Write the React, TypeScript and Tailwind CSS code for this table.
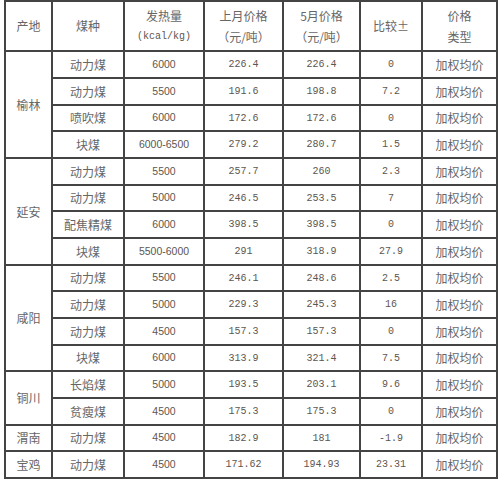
type Row = {
  kind: string;
  heat: string;
  last: string;
  may: string;
  diff: string;
};

type Group = { place: string; rows: Row[] };

const groups: Group[] = [
  {
    place: "榆林",
    rows: [
      { kind: "动力煤", heat: "6000", last: "226.4", may: "226.4", diff: "0" },
      { kind: "动力煤", heat: "5500", last: "191.6", may: "198.8", diff: "7.2" },
      { kind: "喷吹煤", heat: "6000", last: "172.6", may: "172.6", diff: "0" },
      { kind: "块煤", heat: "6000-6500", last: "279.2", may: "280.7", diff: "1.5" },
    ],
  },
  {
    place: "延安",
    rows: [
      { kind: "动力煤", heat: "5500", last: "257.7", may: "260", diff: "2.3" },
      { kind: "动力煤", heat: "5000", last: "246.5", may: "253.5", diff: "7" },
      { kind: "配焦精煤", heat: "6000", last: "398.5", may: "398.5", diff: "0" },
      { kind: "块煤", heat: "5500-6000", last: "291", may: "318.9", diff: "27.9" },
    ],
  },
  {
    place: "咸阳",
    rows: [
      { kind: "动力煤", heat: "5500", last: "246.1", may: "248.6", diff: "2.5" },
      { kind: "动力煤", heat: "5000", last: "229.3", may: "245.3", diff: "16" },
      { kind: "动力煤", heat: "4500", last: "157.3", may: "157.3", diff: "0" },
      { kind: "块煤", heat: "6000", last: "313.9", may: "321.4", diff: "7.5" },
    ],
  },
  {
    place: "铜川",
    rows: [
      { kind: "长焰煤", heat: "5000", last: "193.5", may: "203.1", diff: "9.6" },
      { kind: "贫瘦煤", heat: "4500", last: "175.3", may: "175.3", diff: "0" },
    ],
  },
  {
    place: "渭南",
    rows: [{ kind: "动力煤", heat: "4500", last: "182.9", may: "181", diff: "-1.9" }],
  },
  {
    place: "宝鸡",
    rows: [{ kind: "动力煤", heat: "4500", last: "171.62", may: "194.93", diff: "23.31" }],
  },
];

const cjk = "font-['Noto_Sans_CJK_SC',sans-serif] text-[12px] text-[#666]";
const mono = "font-['Liberation_Mono','Noto_Sans_CJK_SC',monospace] text-[10px] text-[#5e5650]";
const sans = "font-['Liberation_Sans',sans-serif] text-[10.5px] text-[#5e5650]";
const cell = "border-2 border-[#444] text-center align-middle p-0";

export default function App() {
  let index = 0;
  return (
    <div className="w-[500px] h-[484px] bg-white pl-[4px] pt-0">
      <table className="table-fixed border-collapse w-[492px]">
        <colgroup>
          <col className="w-[47px]" />
          <col className="w-[72px]" />
          <col className="w-[80px]" />
          <col className="w-[79px]" />
          <col className="w-[77px]" />
          <col className="w-[62px]" />
          <col className="w-[75px]" />
        </colgroup>
        <thead>
          <tr className="h-[50px]">
            <th className={`${cell} ${cjk} font-normal`}>产地</th>
            <th className={`${cell} ${cjk} font-normal`}>煤种</th>
            <th className={`${cell} font-normal leading-[21px]`}>
              <div className={cjk}>发热量</div>
              <div className={mono}>(kcal/kg)</div>
            </th>
            <th className={`${cell} ${cjk} font-normal leading-[21px]`}>
              <div>上月价格</div>
              <div>（元/吨）</div>
            </th>
            <th className={`${cell} ${cjk} font-normal leading-[21px]`}>
              <div>5月价格</div>
              <div>（元/吨）</div>
            </th>
            <th className={`${cell} ${cjk} font-normal`}>比较±</th>
            <th className={`${cell} ${cjk} font-normal leading-[21px]`}>
              <div>价格</div>
              <div>类型</div>
            </th>
          </tr>
        </thead>
        <tbody>
          {groups.map((g) =>
            g.rows.map((r, i) => {
              const tall = index++ % 3 !== 2;
              return (
                <tr key={g.place + i} className={tall ? "h-[27px]" : "h-[26px]"}>
                  {i === 0 && (
                    <td rowSpan={g.rows.length} className={`${cell} ${cjk}`}>
                      {g.place}
                    </td>
                  )}
                  <td className={`${cell} ${cjk}`}>{r.kind}</td>
                  <td className={`${cell} ${sans}`}>{r.heat}</td>
                  <td className={`${cell} ${mono}`}>{r.last}</td>
                  <td className={`${cell} ${mono}`}>{r.may}</td>
                  <td className={`${cell} ${mono}`}>{r.diff}</td>
                  <td className={`${cell} ${cjk}`}>加权均价</td>
                </tr>
              );
            })
          )}
        </tbody>
      </table>
    </div>
  );
}
